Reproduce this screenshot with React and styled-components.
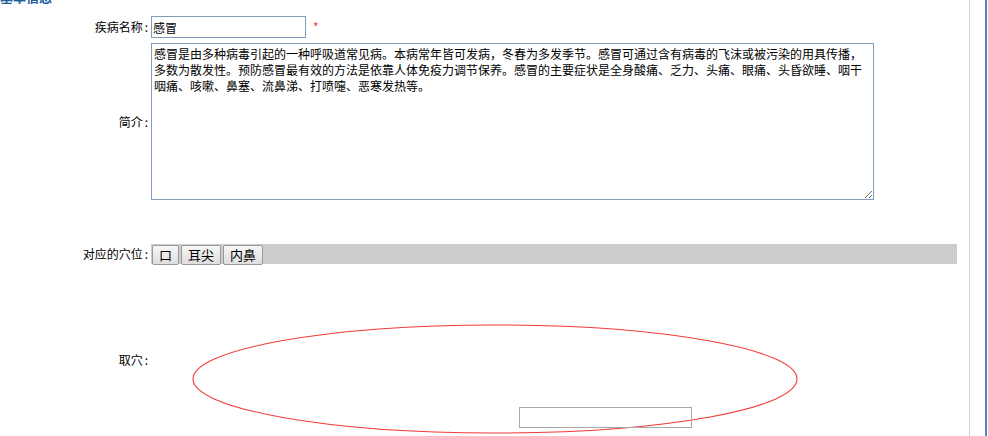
import React from "react";
import styled, { createGlobalStyle } from "styled-components";

const Global = createGlobalStyle`
  html, body { margin: 0; padding: 0; background: #fff; }
  body {
    font-family: "Noto Sans CJK SC", "Liberation Sans", sans-serif;
    font-size: 12px;
    color: #000;
    overflow: hidden;
  }
`;

const Frame = styled.div`
  display: flex;
  width: 988px;
  height: 436px;
  overflow: hidden;
`;

const Main = styled.div`
  width: 970px;
  flex: none;
  border-right: 1px solid #c3d7ea;
  box-sizing: border-box;
  padding-right: 12px;
`;

const Gap = styled.div`
  width: 15px;
  flex: none;
`;

const Edge = styled.div`
  width: 2px;
  flex: none;
  background: #4a84bd;
`;

const Heading = styled.h2`
  margin: -10px 0 0 0;
  font-size: 13px;
  line-height: 14px;
  font-weight: bold;
  color: #1b5c9e;
  height: 14px;
`;

const Row = styled.div`
  display: grid;
  grid-template-columns: 151px 1fr;
  align-items: ${(p) => p.$align || "center"};
  margin-top: ${(p) => p.$mt || 0}px;
`;

const Label = styled.div`
  text-align: right;
  padding-right: 2px;
  line-height: 16px;
  padding-top: ${(p) => p.$top || 0}px;
  white-space: nowrap;
`;

const Colon = styled.span`
  margin-left: 2px;
  margin-right: 1px;
`;

const Cell = styled.div`
  display: flex;
  align-items: center;
  position: relative;
`;

const NameInput = styled.input`
  width: 155px;
  height: 22px;
  box-sizing: border-box;
  border: 1px solid #7f9db9;
  padding: 0 1px;
  font: 12px "Noto Sans CJK SC", sans-serif;
  color: #000;
  outline: none;
`;

const Star = styled.span`
  color: #ff3333;
  margin-left: 7px;
  font-size: 12px;
  align-self: flex-start;
  margin-top: 2px;
`;

const Intro = styled.textarea`
  width: 723px;
  height: 157px;
  box-sizing: border-box;
  border: 1px solid #7f9db9;
  padding: 2px 2px;
  font: 12px/16px "Noto Sans CJK SC", sans-serif;
  color: #000;
  resize: both;
  outline: none;
  display: block;
`;

const Bar = styled.div`
  flex: 1;
  height: 20px;
  background: #cccccc;
  display: flex;
  align-items: stretch;
  padding-left: 1px;
  gap: 2px;
`;

const Btn = styled.button`
  height: 20px;
  box-sizing: border-box;
  padding: 0 6px;
  border: 1px solid #9a9a9a;
  border-radius: 2px;
  background: linear-gradient(#f6f6f6, #dedede);
  font: 13px/16px "Noto Sans CJK SC", sans-serif;
  color: #000;
  margin-top: 1px;
`;

const Canvas = styled.div`
  position: relative;
  height: 112px;
`;

const Drawing = styled.svg`
  display: block;
  margin-left: 40px;
`;

const PointInput = styled.input`
  position: absolute;
  left: 368px;
  top: 83px;
  width: 173px;
  height: 21px;
  box-sizing: border-box;
  border: 1px solid #a9a9a9;
  background: transparent;
  outline: none;
`;

export default function App() {
  return (
    <>
      <Global />
      <Frame>
        <Main>
          <Heading>基本信息</Heading>
          <Row $mt={12}>
            <Label>疾病名称<Colon>:</Colon></Label>
            <Cell>
              <NameInput defaultValue="感冒" />
              <Star>*</Star>
            </Cell>
          </Row>

          <Row $mt={5}>
            <Label>简介<Colon>:</Colon></Label>
            <Cell>
              <Intro defaultValue="感冒是由多种病毒引起的一种呼吸道常见病。本病常年皆可发病，冬春为多发季节。感冒可通过含有病毒的飞沫或被污染的用具传播，多数为散发性。预防感冒最有效的方法是依靠人体免疫力调节保养。感冒的主要症状是全身酸痛、乏力、头痛、眼痛、头昏欲睡、咽干咽痛、咳嗽、鼻塞、流鼻涕、打喷嚏、恶寒发热等。" />
            </Cell>
          </Row>

          <Row $mt={44}>
            <Label>对应的穴位<Colon>:</Colon></Label>
            <Cell>
              <Bar>
                <Btn>口</Btn>
                <Btn>耳尖</Btn>
                <Btn>内鼻</Btn>
              </Bar>
            </Cell>
          </Row>

          <Row $mt={60} $align="start">
            <Label $top={28}>取穴<Colon>:</Colon></Label>
            <Cell>
              <Canvas>
                <Drawing width="620" height="112" viewBox="0 0 620 112">
                  <ellipse cx="304" cy="55" rx="302" ry="54" fill="none" stroke="#f23a3a" strokeWidth="1.1" />
                </Drawing>
                <PointInput />
              </Canvas>
            </Cell>
          </Row>
        </Main>
        <Gap />
        <Edge />
      </Frame>
    </>
  );
}
